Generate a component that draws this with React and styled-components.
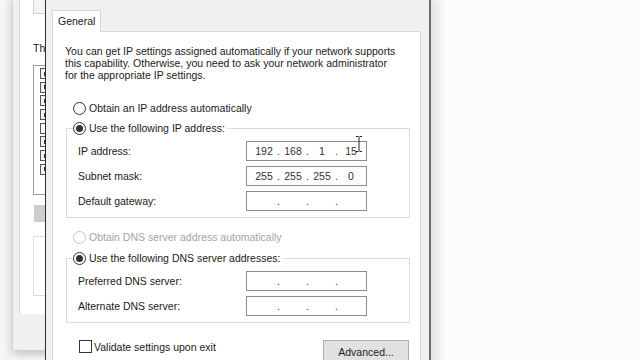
import React from 'react'
import styled, { createGlobalStyle } from 'styled-components'

const Global = createGlobalStyle`
  html, body {
    margin: 0;
    padding: 0;
    background: #fbfbfb;
    overflow: hidden;
  }
  body {
    font-family: "Liberation Sans", Arial, sans-serif;
    font-size: 10.5px;
    color: #1a1a1a;
  }
`

const Desktop = styled.div`
  position: relative;
  width: 640px;
  height: 360px;
  overflow: hidden;
  background: #fbfbfb;
`

const LeftStrip = styled.div`
  position: absolute;
  left: 0;
  top: 0;
  width: 12px;
  height: 360px;
  background: #f6f6f6;
`

/* window behind the dialog */
const BackWindow = styled.div`
  position: absolute;
  left: 12px;
  top: -6px;
  width: 80px;
  height: 356px;
  box-sizing: border-box;
  background: #f0f0f0;
  border-left: 1px solid #d4d4d4;
  box-shadow: 0 5px 9px rgba(0, 0, 0, 0.22);
  padding: 0 0 36px 6px;
  display: flex;
`

const BackPanel = styled.div`
  flex: 1;
  background: #fff;
  border-left: 1px solid #dadada;
  padding-left: 13px;
  display: flex;
  flex-direction: column;
`

const BackTopBox = styled.div`
  height: 20px;
  border: 1px solid #d0d0d0;
  border-top: none;
  background: #f4f4f4;
  box-sizing: border-box;
`

const BackText = styled.div`
  margin-top: 28px;
  line-height: 12px;
`

const BackList = styled.div`
  margin-top: 11px;
  height: 130px;
  border: 1px solid #9c9c9c;
  box-sizing: border-box;
  padding: 2px 0 0 6px;
  display: flex;
  flex-direction: column;
  gap: 2.7px;
`

const BackCheck = styled.div`
  width: 11px;
  height: 11px;
  box-sizing: border-box;
  border: 1px solid #555;
  background: ${p => (p.on ? '#f4f4f4' : '#fff')};
  display: flex;
  align-items: center;
  justify-content: center;
  &::after {
    content: '';
    display: ${p => (p.on ? 'block' : 'none')};
    width: 4px;
    height: 4px;
    background: #333;
  }
`

const BackButton = styled.div`
  margin-top: 10px;
  margin-left: 1px;
  height: 17px;
  background: #cdcdcd;
`

const BackBox = styled.div`
  margin-top: 14px;
  height: 58px;
  border: 1px solid #dcdcdc;
  border-right: none;
`

/* the IPv4 properties dialog */
const Dialog = styled.div`
  position: absolute;
  left: 45px;
  top: -4px;
  width: 386px;
  height: 380px;
  box-sizing: border-box;
  background: #f0f0f0;
  border-left: 1px solid #2e2e2e;
  border-right: 2px solid #6e6e6e;
  box-shadow: 7px 0 10px rgba(0, 0, 0, 0.1);
  padding: 14px 8px 0 6px;
  display: flex;
  flex-direction: column;
`

const TabStrip = styled.div`
  display: flex;
`

const Tab = styled.div`
  position: relative;
  z-index: 1;
  height: 21px;
  line-height: 21px;
  padding: 0 5px;
  background: #fff;
  border: 1px solid #d9d9d9;
  border-bottom: none;
  margin-bottom: -1px;
`

const TabPanel = styled.div`
  flex: 1;
  background: #fff;
  border: 1px solid #d9d9d9;
  padding: 13px 10px 0 12px;
  display: flex;
  flex-direction: column;
`

const Intro = styled.p`
  margin: 0;
  line-height: 12px;
`

const RadioRow = styled.label`
  display: flex;
  align-items: center;
  gap: 3px;
  height: 14px;
  padding-left: ${p => (p.inLegend ? 0 : 8)}px;
  margin-top: ${p => p.top || 0}px;
  color: ${p => (p.disabled ? '#a3a3a3' : '#1a1a1a')};
  white-space: nowrap;
`

const RadioDot = styled.span`
  width: 13px;
  height: 13px;
  box-sizing: border-box;
  border-radius: 50%;
  border: 1px solid ${p => (p.disabled ? '#c4c4c4' : '#333')};
  background: #fff;
  display: flex;
  align-items: center;
  justify-content: center;
  &::after {
    content: '';
    display: ${p => (p.checked ? 'block' : 'none')};
    width: 7px;
    height: 7px;
    border-radius: 50%;
    background: #333;
  }
`

const Group = styled.fieldset`
  margin: ${p => p.top}px 0 0 1px;
  padding: 0;
  border: 1px solid #dcdcdc;
  min-width: 0;
`

const Legend = styled.legend`
  margin-left: 6px;
  padding: 0 2px 0 0;
  background: #fff;
`

const Fields = styled.div`
  display: grid;
  grid-template-columns: 168px 121px;
  row-gap: 5px;
  align-items: center;
  padding: 6px 0 6px 11px;
`

const FieldLabel = styled.span`
  white-space: nowrap;
`

const IpBox = styled.div`
  position: relative;
  height: 20px;
  box-sizing: border-box;
  border: 1px solid #8c8c8c;
  background: #fff;
  display: flex;
  align-items: center;
  padding-left: 6px;
  color: #333;
`

const Octet = styled.span`
  width: 22px;
  text-align: center;
`

const Dot = styled.span`
  width: 7px;
  text-align: center;
`

const Caret = styled.svg`
  position: absolute;
  left: 108px;
  top: -6px;
`

const BottomRow = styled.div`
  margin-top: 17px;
  display: flex;
  justify-content: space-between;
  align-items: flex-start;
`

const CheckLabel = styled.label`
  display: flex;
  align-items: center;
  gap: 2px;
  height: 13px;
  padding-left: 14px;
`

const CheckBox = styled.span`
  width: 13px;
  height: 13px;
  box-sizing: border-box;
  border: 1px solid #333;
  background: #fff;
`

const Button = styled.button`
  width: 86px;
  height: 23px;
  margin-right: 1px;
  background: #e1e1e1;
  border: 1px solid #adadad;
  font: inherit;
  color: #1a1a1a;
  padding: 0;
`

function IpField({ value, caret }) {
  const parts = value ? value.split('.') : ['', '', '', '']
  return (
    <IpBox>
      {parts.map((p, i) => (
        <React.Fragment key={i}>
          <Octet>{p}</Octet>
          {i < 3 && <Dot>.</Dot>}
        </React.Fragment>
      ))}
      {caret && (
        <Caret width="8" height="16" viewBox="0 0 8 16">
          <path d="M1 0.5H3.5M4.5 0.5H7M4 1V15M1 15.5H3.5M4.5 15.5H7" stroke="#222" strokeWidth="1" fill="none" />
        </Caret>
      )}
    </IpBox>
  )
}

function Radio({ checked, disabled, inLegend, top, children }) {
  return (
    <RadioRow disabled={disabled} inLegend={inLegend} top={top}>
      <RadioDot checked={checked} disabled={disabled} />
      {children}
    </RadioRow>
  )
}

const backChecks = [true, true, true, true, false, true, true, true]

export default function App() {
  return (
    <Desktop>
      <Global />
      <LeftStrip />
      <BackWindow>
        <BackPanel>
          <BackTopBox />
          <BackText>This</BackText>
          <BackList>
            {backChecks.map((on, i) => (
              <BackCheck key={i} on={on} />
            ))}
          </BackList>
          <BackButton />
          <BackBox />
        </BackPanel>
      </BackWindow>

      <Dialog>
        <TabStrip>
          <Tab>General</Tab>
        </TabStrip>
        <TabPanel>
          <Intro>
            You can get IP settings assigned automatically if your network supports
            <br />
            this capability. Otherwise, you need to ask your network administrator
            <br />
            for the appropriate IP settings.
          </Intro>

          <Radio top={20}>Obtain an IP address automatically</Radio>

          <Group top={6}>
            <Legend>
              <Radio checked inLegend>Use the following IP address:</Radio>
            </Legend>
            <Fields>
              <FieldLabel>IP address:</FieldLabel>
              <IpField value="192.168.1.15" caret />
              <FieldLabel>Subnet mask:</FieldLabel>
              <IpField value="255.255.255.0" />
              <FieldLabel>Default gateway:</FieldLabel>
              <IpField />
            </Fields>
          </Group>

          <Radio disabled top={12}>Obtain DNS server address automatically</Radio>

          <Group top={7}>
            <Legend>
              <Radio checked inLegend>Use the following DNS server addresses:</Radio>
            </Legend>
            <Fields>
              <FieldLabel>Preferred DNS server:</FieldLabel>
              <IpField />
              <FieldLabel>Alternate DNS server:</FieldLabel>
              <IpField />
            </Fields>
          </Group>

          <BottomRow>
            <CheckLabel>
              <CheckBox />
              Validate settings upon exit
            </CheckLabel>
            <Button>Advanced...</Button>
          </BottomRow>
        </TabPanel>
      </Dialog>
    </Desktop>
  )
}
